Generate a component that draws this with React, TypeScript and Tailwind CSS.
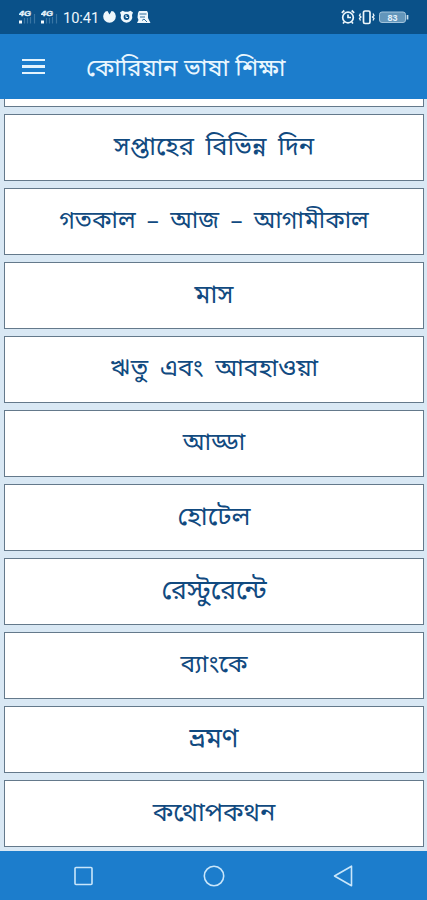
const topics = [
  { title: "সপ্তাহের বিভিন্ন দিন", className: "pt-0.5 text-[25.5px] [word-spacing:5px]" },
  { title: "গতকাল – আজ – আগামীকাল", className: "pt-0.5 text-[24.2px] [word-spacing:5px]" },
  { title: "মাস", className: "pt-0.5 text-[26px]" },
  { title: "ঋতু এবং আবহাওয়া", className: "pt-0.5 text-[24.6px] [word-spacing:5.5px]" },
  { title: "আড্ডা", className: "pt-0.5 text-[24.5px]" },
  { title: "হোটেল", className: "pt-0.5 text-[26px]" },
  { title: "রেস্টুরেন্টে", className: "pt-1 text-[26.5px]" },
  { title: "ব্যাংকে", className: "pt-0.5 text-[24.5px]" },
  { title: "ভ্রমণ", className: "pt-0.5 text-[27px]" },
  { title: "কথোপকথন", className: "pt-0.5 text-[25.5px]" },
];

function SignalIcon() {
  return (
    <svg width="17" height="16" viewBox="0 0 17 16">
      <text
        x="0"
        y="6.5"
        fontSize="7.5"
        fontWeight="700"
        fontStyle="italic"
        fill="#e6f3fb"
        stroke="#e6f3fb"
        strokeWidth="0.4"
        textLength="12"
        lengthAdjust="spacingAndGlyphs"
      >
        4G
      </text>
      <path d="M0 11.5h3v3H0z" fill="#f4fafd" />
      <path d="M5.5 9v5.5M8.5 9v5.5M11.5 8v6.5M15.5 5v9.5" stroke="#3a76a4" strokeWidth="1.2" />
    </svg>
  );
}

function StatusBar() {
  return (
    <div className="flex h-[34px] shrink-0 items-center bg-[#0a5189] pr-[17px] pl-[19px] text-[#eef7fc]">
      <div className="flex items-center gap-[5px]">
        <SignalIcon />
        <SignalIcon />
      </div>
      <span className="mt-0.5 ml-[5px] w-9 font-['Roboto',sans-serif] text-[14.7px] leading-none tracking-[-0.1px] whitespace-nowrap">
        10:41
      </span>
      {/* Notifications */}
      <svg className="ml-1" width="48" height="14" viewBox="0 0 48 14" fill="currentColor">
        <path d="M2.5 1.5 4.5 1l2 3.500 2-3.500 2 .5A6.300 6.300 0 1 1 2.500 1.500z" />
        <path d="M17 2.500 19.500.8l2.500 1h3l2.500-1L30 2.500l-1 2.500a5.800 5.800 0 1 1-11 0z" />
        <circle cx="23.500" cy="7" r="2.900" fill="#0a5189" />
        <path d="M23 5v2.500h2" fill="none" stroke="currentColor" />
        <path d="M36 1h8l1 2v5l2.500 5H34l1.500-3-1-2.500L35 3z" />
        <path d="M36.500 4h7M37 7h5M39 10.500l2-1.500 3 3" stroke="#2f6f9f" fill="none" />
      </svg>
      {/* Alarm, vibrate, battery */}
      <svg className="ml-auto" width="69" height="16" viewBox="0 0 69 16" fill="none" stroke="currentColor" strokeWidth="1.700">
        <circle cx="7" cy="8.500" r="5.300" />
        <path d="M7 5.500v3h3M.8 3.800 3.300 1.500M10.700 1.500l2.500 2.300M3.300 13l-1.300 1.500M10.700 13l1.300 1.500" />
        <rect x="22.500" y="2" width="6.500" height="12.500" rx="1.500" />
        <path d="m19.500 4.500-1 2 1.500 1.500-1.500 1.500 1 2M32 4.500l1 2L31.500 8 33 9.500l-1 2" strokeWidth="1.300" />
        <rect x="38.500" y="3" width="26" height="10.500" rx="2.500" fill="#6396bb" stroke="#a3c4dc" strokeWidth="1" />
        <path d="M66.500 6v4.500" stroke="#c8dfee" />
        <text x="51.500" y="11.500" fontSize="9" fontWeight="700" textAnchor="middle" fill="#e3f1fa" stroke="none">
          83
        </text>
      </svg>
    </div>
  );
}

function AppBar() {
  return (
    <header className="flex h-[65px] shrink-0 items-center bg-[#1c7dcc]">
      <button aria-label="Menu" className="ml-[22px] flex w-[23px] flex-col gap-1">
        <span className="h-[2.6px] bg-[#e3f3fd]" />
        <span className="h-[2.6px] bg-[#e3f3fd]" />
        <span className="h-[2.6px] bg-[#e3f3fd]" />
      </button>
      <h1 className="ml-[41px] pt-[7px] font-['Noto_Sans_Bengali','Noto_Sans',sans-serif] text-[24.2px] leading-none whitespace-nowrap text-[#e9f6fe]">
        কোরিয়ান ভাষা শিক্ষা
      </h1>
    </header>
  );
}

function NavBar() {
  return (
    <nav className="flex h-[49px] shrink-0 items-center bg-[#1c7dcc] pl-[74px]">
      <svg width="19" height="22" viewBox="0 0 19 22" fill="none" stroke="#c9e6fa" strokeWidth="1.600">
        <rect x="1" y="2.500" width="17" height="17" rx="1" />
      </svg>
      <svg className="ml-[110px]" width="22" height="22" viewBox="0 0 22 22" fill="none" stroke="#c9e6fa" strokeWidth="1.600">
        <circle cx="11" cy="11" r="9.700" />
      </svg>
      <svg className="ml-[108px]" width="22" height="22" viewBox="0 0 22 22" fill="none" stroke="#c9e6fa" strokeWidth="1.600" strokeLinejoin="round">
        <path d="M18.500 1.200v19.600L1.500 11z" />
      </svg>
    </nav>
  );
}

export default function App() {
  return (
    <div className="flex h-[900px] w-[427px] flex-col overflow-hidden bg-[#d9e8f4] font-['Liberation_Sans',sans-serif]">
      <StatusBar />
      <AppBar />
      <main className="flex min-h-0 flex-1 flex-col gap-[7px] overflow-hidden pr-[3px] pl-1">
        <div className="h-2 shrink-0 border border-t-0 border-[#64798b] bg-white" />
        {topics.map((topic) => (
          <button
            key={topic.title}
            className={`flex h-[67px] shrink-0 items-center justify-center border border-[#64798b] bg-white font-['Noto_Sans_Bengali','Noto_Sans',sans-serif] leading-none whitespace-nowrap text-[#114a80] ${topic.className}`}
          >
            {topic.title}
          </button>
        ))}
      </main>
      <NavBar />
    </div>
  );
}
